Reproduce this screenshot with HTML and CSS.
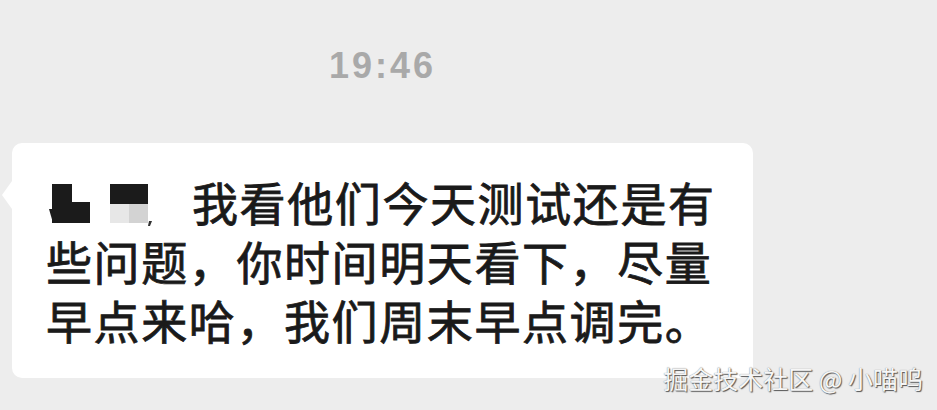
FILE: index.html
```html
<!DOCTYPE html>
<html lang="zh">
<head>
<meta charset="utf-8">
<link rel="stylesheet" href="styles.css">
</head>
<body>
<div class="chat">
  <div class="time">19:46</div>
  <div class="bubble">
    <div class="line first">
      <svg class="redact" width="110" height="59" viewBox="0 0 110 59">
        <rect x="6" y="12" width="20" height="19" fill="#1b1b1b"/>
        <rect x="6" y="30" width="38" height="21" fill="#1b1b1b"/>
        <polygon points="3,37 6,37 12,51 7,51" fill="#1b1b1b"/>
        <rect x="64" y="12" width="38" height="20" fill="#1b1b1b"/>
        <rect x="64" y="32" width="19" height="19" fill="#e7e7e7"/>
        <rect x="83" y="32" width="19" height="19" fill="#d3d3d3"/>
        <polygon points="103,49 106,49 104,54 102,54" fill="#333"/>
      </svg>
      <span class="txt">我看他们今天测试还是有</span>
    </div>
    <div class="line">些问题，你时间明天看下，尽量</div>
    <div class="line">早点来哈，我们周末早点调完。</div>
  </div>
</div>
<div class="watermark">掘金技术社区 @ 小喵呜</div>
</body>
</html>
```
FILE: styles.css
```css
html, body {
  margin: 0;
  padding: 0;
}
body {
  background: #ededed;
  width: 937px;
  height: 410px;
  overflow: hidden;
  position: relative;
  font-family: "Noto Sans CJK SC", "Noto Sans", sans-serif;
}
.chat {
  width: 741px;
  margin-left: 12px;
  padding-top: 45px;
}
.time {
  text-align: center;
  font-family: "Liberation Sans", Arial, sans-serif;
  font-weight: 700;
  font-size: 36px;
  line-height: 42px;
  letter-spacing: 3px;
  color: #a9a9a9;
  height: 42px;
}
.bubble {
  position: relative;
  margin-top: 56px;
  background: #ffffff;
  border-radius: 10px;
  padding: 29px 0 29px 34px;
  height: 177px;
}
.bubble::before {
  content: "";
  position: absolute;
  left: -10px;
  top: 38px;
  border-right: 10px solid #ffffff;
  border-top: 14px solid transparent;
  border-bottom: 14px solid transparent;
}
.line {
  font-size: 46px;
  line-height: 59px;
  height: 59px;
  letter-spacing: 1.6px;
  color: #1a1a1a;
  font-weight: 400;
  -webkit-text-stroke: 0.8px #1a1a1a;
  white-space: nowrap;
}
.line.first {
  display: flex;
  align-items: center;
}
.redact {
  display: block;
  flex: none;
}
.txt {
  margin-left: 36px;
}
.watermark {
  position: absolute;
  right: 14px;
  top: 362px;
  font-size: 25px;
  line-height: 32px;
  color: #f6f6f6;
  text-shadow: 1px 1px 1px #555, 0 0 1px #777;
  white-space: nowrap;
}
```
